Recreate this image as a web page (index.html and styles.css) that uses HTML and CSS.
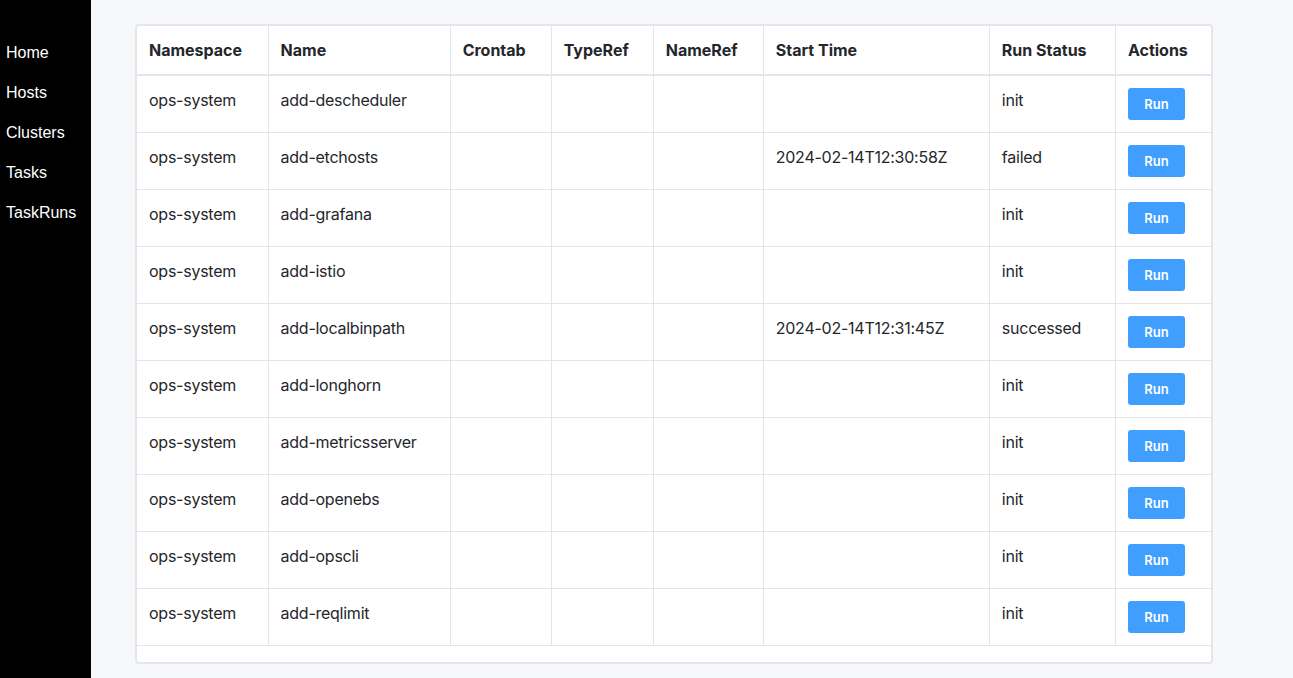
FILE: index.html
```html
<!DOCTYPE html>
<html>
<head>
<meta charset="utf-8">
<link rel="stylesheet" href="styles.css">
</head>
<body>
<div class="layout">
  <nav class="sidebar">
    <a class="nav-item" href="#">Home</a>
    <a class="nav-item" href="#">Hosts</a>
    <a class="nav-item" href="#">Clusters</a>
    <a class="nav-item" href="#">Tasks</a>
    <a class="nav-item" href="#">TaskRuns</a>
  </nav>
  <main class="main">
    <div class="card">
      <table class="table">
        <colgroup>
          <col class="c1"><col class="c2"><col class="c3"><col class="c4"><col class="c5"><col class="c6"><col class="c7"><col class="c8">
        </colgroup>
        <thead>
          <tr><th>Namespace</th><th>Name</th><th>Crontab</th><th>TypeRef</th><th>NameRef</th><th>Start Time</th><th>Run Status</th><th>Actions</th></tr>
        </thead>
        <tbody>
          <tr><td>ops-system</td><td>add-descheduler</td><td></td><td></td><td></td><td></td><td>init</td><td><button class="btn">Run</button></td></tr>
          <tr><td>ops-system</td><td>add-etchosts</td><td></td><td></td><td></td><td>2024-02-14T12:30:58Z</td><td>failed</td><td><button class="btn">Run</button></td></tr>
          <tr><td>ops-system</td><td>add-grafana</td><td></td><td></td><td></td><td></td><td>init</td><td><button class="btn">Run</button></td></tr>
          <tr><td>ops-system</td><td>add-istio</td><td></td><td></td><td></td><td></td><td>init</td><td><button class="btn">Run</button></td></tr>
          <tr><td>ops-system</td><td>add-localbinpath</td><td></td><td></td><td></td><td>2024-02-14T12:31:45Z</td><td>successed</td><td><button class="btn">Run</button></td></tr>
          <tr><td>ops-system</td><td>add-longhorn</td><td></td><td></td><td></td><td></td><td>init</td><td><button class="btn">Run</button></td></tr>
          <tr><td>ops-system</td><td>add-metricsserver</td><td></td><td></td><td></td><td></td><td>init</td><td><button class="btn">Run</button></td></tr>
          <tr><td>ops-system</td><td>add-openebs</td><td></td><td></td><td></td><td></td><td>init</td><td><button class="btn">Run</button></td></tr>
          <tr><td>ops-system</td><td>add-opscli</td><td></td><td></td><td></td><td></td><td>init</td><td><button class="btn">Run</button></td></tr>
          <tr><td>ops-system</td><td>add-reqlimit</td><td></td><td></td><td></td><td></td><td>init</td><td><button class="btn">Run</button></td></tr>
        </tbody>
      </table>
    </div>
  </main>
</div>
</body>
</html>
```
FILE: styles.css
```css
html, body {
  margin: 0;
  padding: 0;
  height: 100%;
}
body {
  font-family: Inter, "Noto Sans", sans-serif;
  color: #24262b;
  background: #f7f8fa;
}
.layout {
  display: flex;
  min-height: 100vh;
}
.sidebar {
  width: 91px;
  flex: 0 0 91px;
  background: #000;
  padding-top: 32px;
  display: flex;
  flex-direction: column;
}
.nav-item {
  display: block;
  color: #fff;
  text-decoration: none;
  font-family: "Liberation Sans", Arial, sans-serif;
  font-size: 16px;
  line-height: 40px;
  padding-left: 6px;
  padding-top: 1px;
  margin-bottom: -1px;
}
.main {
  flex: 1;
  background: #f7f8fa;
  padding: 24px 80px 16px 44px;
}
.card {
  width: 1074px;
  background: #fff;
  border: 2px solid #e3e5ea;
  border-radius: 4px;
  padding-bottom: 16px;
}
.table {
  border-collapse: collapse;
  table-layout: fixed;
  width: 1075px;
  font-size: 16px;
  letter-spacing: -0.25px;
}
.c1 { width: 131px; }
.c2 { width: 182px; }
.c3 { width: 101px; }
.c4 { width: 102px; }
.c5 { width: 110px; }
.c6 { width: 226px; }
.c7 { width: 126px; }
.c8 { width: 96px; }
.table th, .table td {
  border: 1px solid #e3e5ea;
  padding: 12px;
  line-height: 24px;
  text-align: left;
  vertical-align: top;
  white-space: nowrap;
}
.table tr:first-child th { border-top: 0; }
.table th:first-child, .table td:first-child { border-left: 0; }
.table thead th {
  font-weight: 700;
  letter-spacing: 0;
  border-bottom-width: 2px;
}
.btn {
  display: block;
  height: 32px;
  width: 57px;
  padding: 0;
  border: 0;
  border-radius: 3px;
  background: #409eff;
  color: #fff;
  font-family: Inter, "Noto Sans", sans-serif;
  font-size: 13px;
  font-weight: 600;
  letter-spacing: 0;
  cursor: pointer;
}
```
